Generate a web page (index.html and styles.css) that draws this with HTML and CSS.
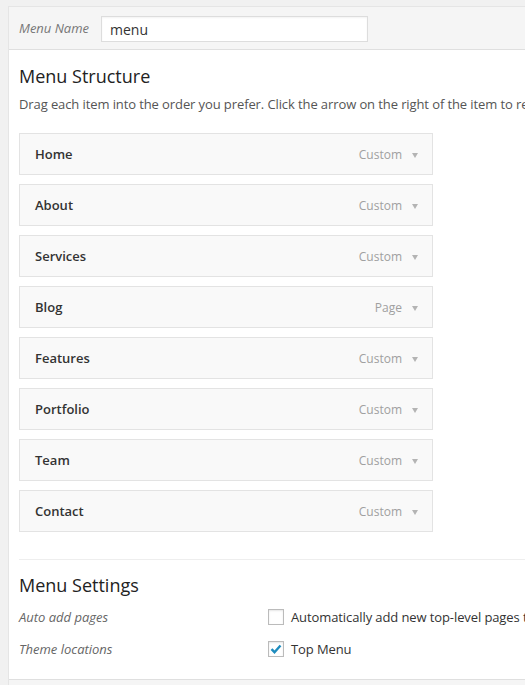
FILE: index.html
```html
<!DOCTYPE html>
<html>
<head>
<meta charset="utf-8">
<link rel="stylesheet" href="styles.css">
</head>
<body>
<div class="panel">
  <div class="header">
    <label class="name-label">Menu Name</label>
    <input class="name-input" type="text" value="menu">
  </div>
  <div class="body">
    <h3 class="title">Menu Structure</h3>
    <p class="desc">Drag each item into the order you prefer. Click the arrow on the right of the item to reveal additional configuration options.</p>
    <ul class="items">
      <li class="item"><span class="item-title">Home</span><span class="item-type">Custom</span><span class="arrow"></span></li>
      <li class="item"><span class="item-title">About</span><span class="item-type">Custom</span><span class="arrow"></span></li>
      <li class="item"><span class="item-title">Services</span><span class="item-type">Custom</span><span class="arrow"></span></li>
      <li class="item"><span class="item-title">Blog</span><span class="item-type">Page</span><span class="arrow"></span></li>
      <li class="item"><span class="item-title">Features</span><span class="item-type">Custom</span><span class="arrow"></span></li>
      <li class="item"><span class="item-title">Portfolio</span><span class="item-type">Custom</span><span class="arrow"></span></li>
      <li class="item"><span class="item-title">Team</span><span class="item-type">Custom</span><span class="arrow"></span></li>
      <li class="item"><span class="item-title">Contact</span><span class="item-type">Custom</span><span class="arrow"></span></li>
    </ul>
    <div class="settings">
      <h3 class="title settings-title">Menu Settings</h3>
      <div class="rows">
        <div class="row">
          <span class="row-label">Auto add pages</span>
          <span class="row-value"><span class="cb"></span>Automatically add new top-level pages to this menu</span>
        </div>
        <div class="row">
          <span class="row-label">Theme locations</span>
          <span class="row-value"><span class="cb checked"><svg width="12" height="10" viewBox="0 0 12 10"><path d="M1.5 5.2 L4.5 8.2 L10.5 1.5" fill="none" stroke="#1e8cbe" stroke-width="2.4"/></svg></span>Top Menu</span>
        </div>
      </div>
    </div>
  </div>
  <div class="footer"></div>
</div>
</body>
</html>
```
FILE: styles.css
```css
html, body {
  margin: 0;
  padding: 0;
}
body {
  background: #f1f1f1;
  font-family: "Open Sans", sans-serif;
  color: #444;
  overflow: hidden;
  width: 525px;
  height: 685px;
}
.panel {
  margin: 6px 0 0 8px;
  border: 1px solid #e5e5e5;
  border-right: none;
  background: #fff;
  width: 600px;
}
.header {
  background: #f5f5f5;
  border-bottom: 1px solid #dfdfdf;
  height: 42px;
  display: flex;
  align-items: center;
  padding-left: 10px;
}
.name-label {
  font-style: italic;
  font-size: 13px;
  color: #777;
  width: 82px;
}
.name-input {
  width: 267px;
  height: 26px;
  box-sizing: border-box;
  border: 1px solid #ddd;
  background: #fff;
  font-family: "Open Sans", sans-serif;
  font-size: 14px;
  color: #333;
  padding: 0 8px 0 8px;
  margin: 2px 0 0 0;
  outline: none;
  box-shadow: inset 0 1px 2px rgba(0,0,0,0.05);
}
.body {
  padding: 0 0 0 10px;
}
.title {
  font-size: 18px;
  font-weight: 400;
  color: #222;
  margin: 0;
  padding-top: 13px;
  line-height: 26px;
}
.desc {
  margin: 6px 0 0 0;
  font-size: 13px;
  line-height: 18px;
  color: #555;
  white-space: nowrap;
  letter-spacing: -0.1px;
}
.items {
  list-style: none;
  margin: 20px 0 0 0;
  padding: 0;
  width: 414px;
}
.item {
  box-sizing: border-box;
  height: 42px;
  margin-bottom: 9px;
  border: 1px solid #e3e3e3;
  background: #f9f9f9;
  display: flex;
  align-items: center;
  padding-left: 15px;
  padding-right: 14px;
}
.item-title {
  flex: 1;
  font-size: 13px;
  font-weight: 600;
  color: #333;
}
.item-type {
  font-size: 12px;
  color: #a0a0a0;
}
.arrow {
  width: 0;
  height: 0;
  border-left: 3.5px solid transparent;
  border-right: 3.5px solid transparent;
  border-top: 5px solid #b4b4b4;
  margin-left: 10px;
  margin-top: 2px;
}
.settings {
  margin-top: 27px;
  border-top: 1px solid #eee;
}
.settings-title {
  padding-top: 12px;
}
.rows {
  margin-top: 3px;
}
.row {
  display: flex;
  align-items: center;
  height: 32px;
}
.row-label {
  width: 249px;
  font-style: italic;
  font-size: 13px;
  color: #666;
}
.row-value {
  display: flex;
  align-items: center;
  font-size: 13px;
  color: #333;
  white-space: nowrap;
  letter-spacing: -0.1px;
}
.cb {
  box-sizing: border-box;
  width: 16px;
  height: 16px;
  border: 1px solid #bbb;
  background: #fff;
  margin-right: 7px;
  display: flex;
  align-items: center;
  justify-content: center;
  box-shadow: inset 0 1px 2px rgba(0,0,0,0.1);
}
.footer {
  margin-top: 14px;
  height: 10px;
  border-top: 1px solid #dfdfdf;
  background: #f5f5f5;
}
```
